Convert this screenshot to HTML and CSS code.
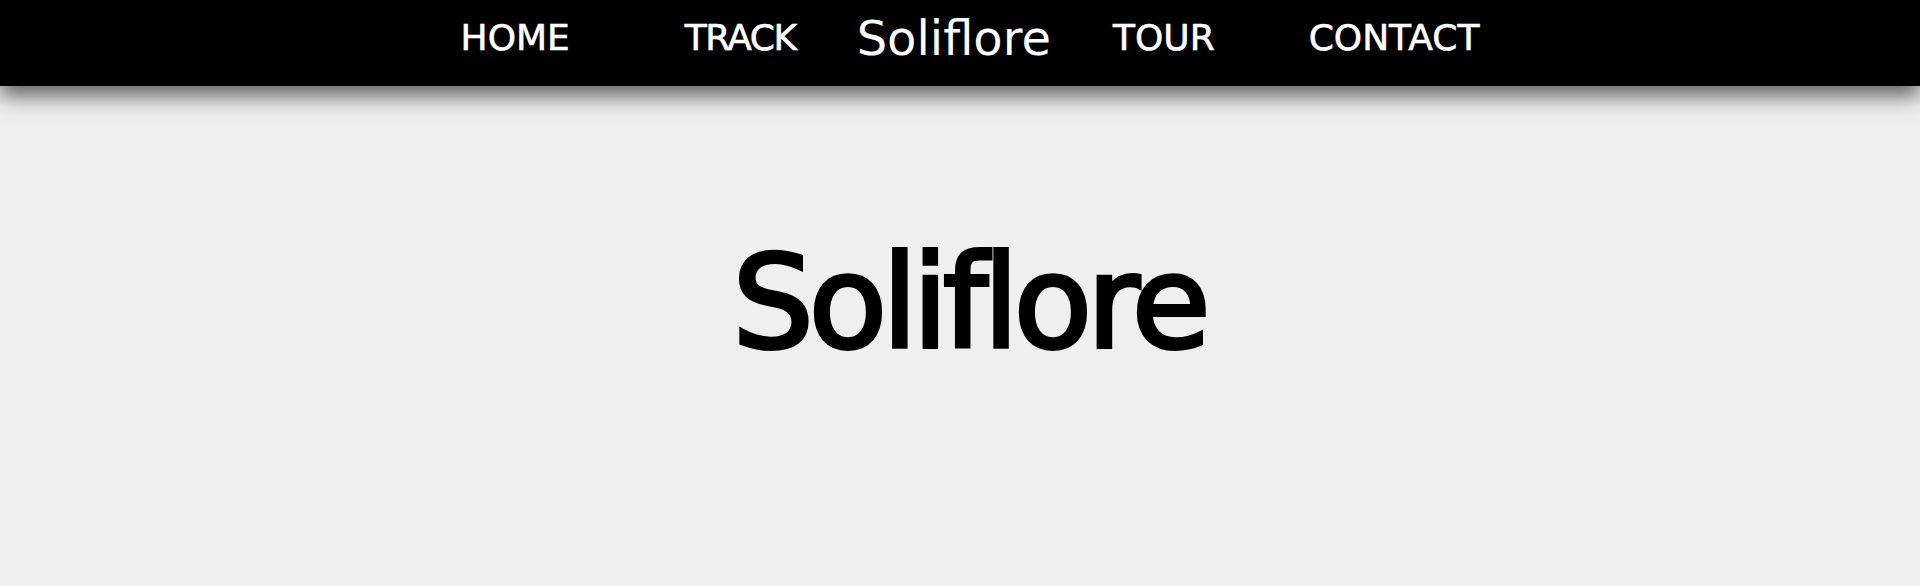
FILE: index.html
```html
<!DOCTYPE html>
<html lang="en">
<head>
<meta charset="utf-8">
<title>Soliflore</title>
<link rel="stylesheet" href="styles.css">
</head>
<body>
<header class="site-header">
  <nav class="main-nav">
    <a class="nav-link nav-home" href="#">HOME</a>
    <a class="nav-link nav-track" href="#">TRACK</a>
    <a class="nav-logo" href="#">Soliflore</a>
    <a class="nav-link nav-tour" href="#">TOUR</a>
    <a class="nav-link nav-contact" href="#">CONTACT</a>
  </nav>
</header>
<main class="hero">
  <h1 class="hero-title">Soliflore</h1>
</main>
</body>
</html>
```

FILE: styles.css
```css
* { box-sizing: border-box; }
html, body { margin: 0; padding: 0; }
body {
  background: #efefef;
  font-family: "DejaVu Sans", Verdana, sans-serif;
  color: #000;
  height: 586px;
  overflow: hidden;
}
.site-header {
  position: relative;
  z-index: 1;
  height: 86px;
  background: #000;
  box-shadow: 0 10px 20px rgba(0, 0, 0, 0.6);
}
.main-nav {
  display: flex;
  justify-content: center;
  align-items: center;
  height: 86px;
  padding-bottom: 11px;
  padding-left: 20px;
}
.nav-link, .nav-logo {
  color: #fff;
  text-decoration: none;
  line-height: 1;
}
.nav-link {
  font-size: 36px;
  letter-spacing: 0;
  -webkit-text-stroke: 0.6px #fff;
}
.nav-track { letter-spacing: -1.5px; }
.nav-logo {
  font-size: 48px;
}
.nav-home { margin-right: 115px; }
.nav-track { margin-right: 61px; }
.nav-logo { margin-right: 62px; }
.nav-tour { margin-right: 94px; }
.hero {
  padding-top: 153px;
  padding-left: 18px;
}
.hero-title {
  margin: 0;
  text-align: center;
  font-size: 128px;
  font-weight: normal;
  line-height: 1;
  letter-spacing: -5px;
  -webkit-text-stroke: 4px #000;
}
```
